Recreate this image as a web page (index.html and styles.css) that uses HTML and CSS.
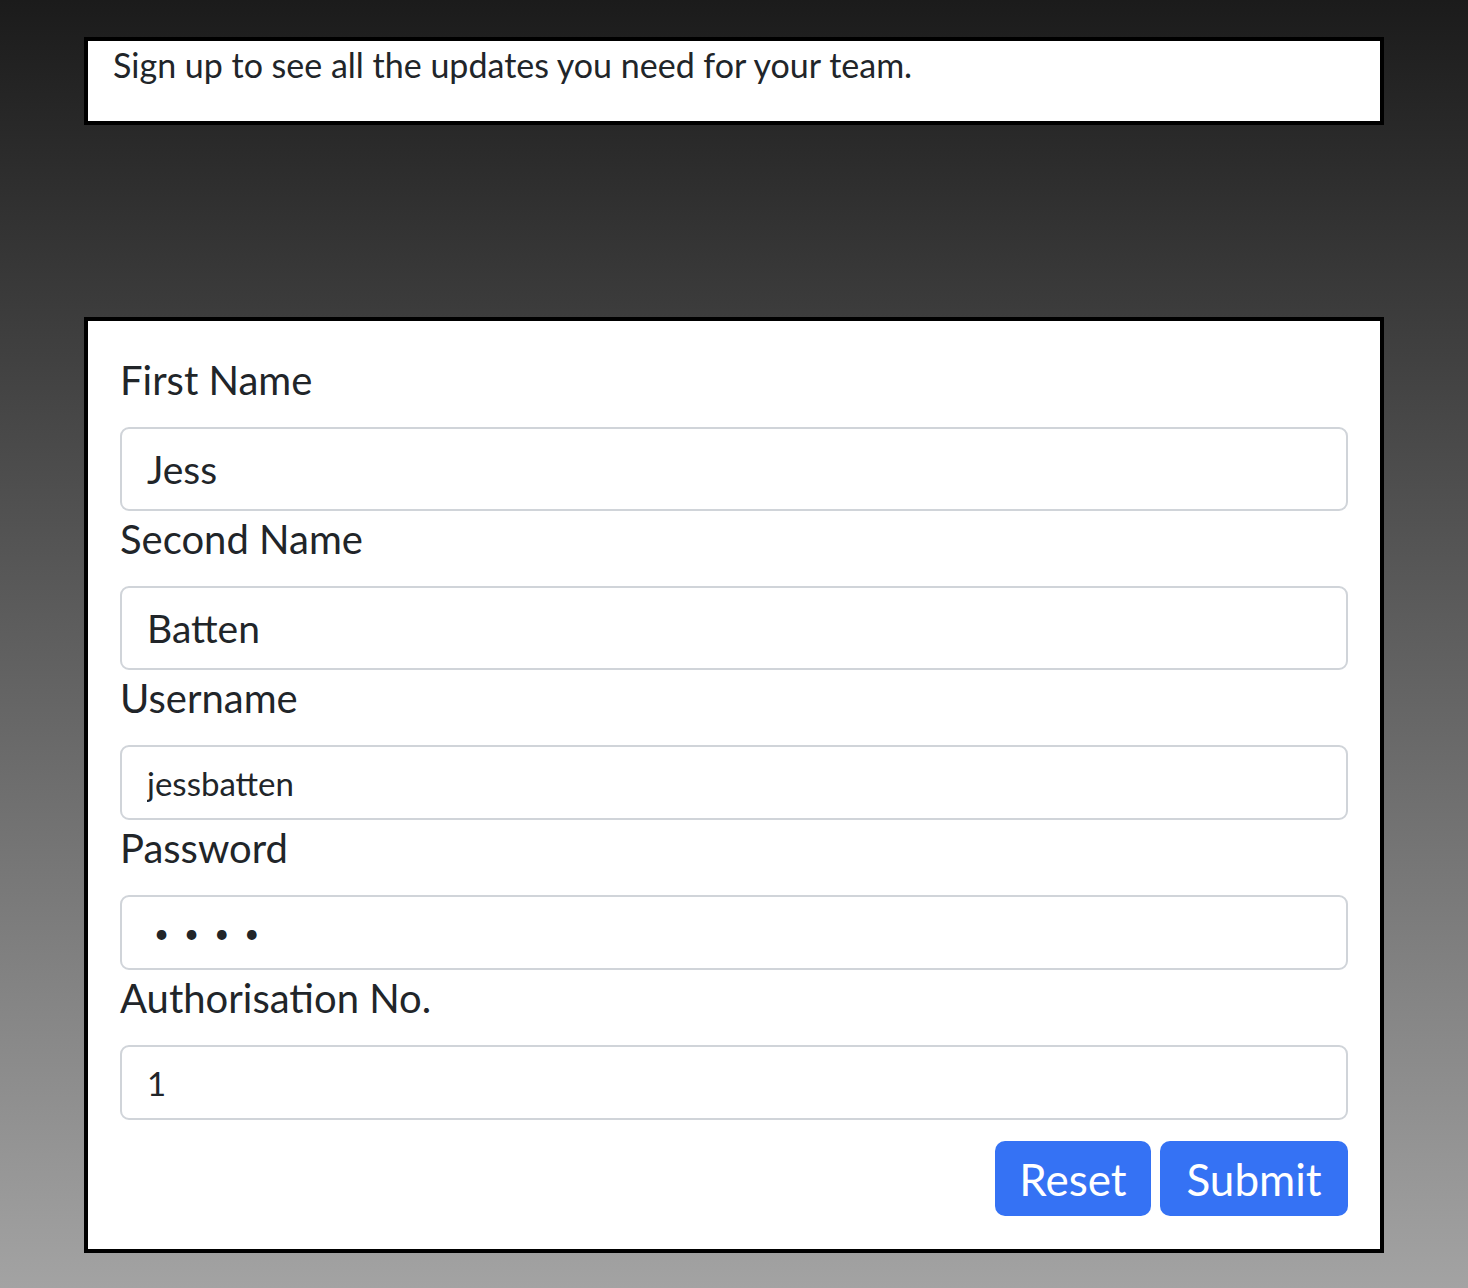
FILE: index.html
```html
<!DOCTYPE html>
<html>
<head>
<meta charset="utf-8">
<link rel="stylesheet" href="styles.css">
</head>
<body>
<div class="page">
  <div class="intro">
    <p>Sign up to see all the updates you need for your team.</p>
  </div>
  <form class="card">
    <label class="lbl" for="fn">First Name</label>
    <input class="field field-lg" id="fn" type="text" value="Jess">
    <label class="lbl" for="sn">Second Name</label>
    <input class="field field-lg" id="sn" type="text" value="Batten">
    <label class="lbl" for="un">Username</label>
    <input class="field" id="un" type="text" value="jessbatten">
    <label class="lbl" for="pw">Password</label>
    <input class="field field-pw" id="pw" type="password" value="1234">
    <label class="lbl" for="an">Authorisation No.</label>
    <input class="field" id="an" type="text" value="1">
    <div class="actions">
      <button type="button" class="btn btn-reset">Reset</button>
      <button type="button" class="btn btn-submit">Submit</button>
    </div>
  </form>
</div>
</body>
</html>
```

FILE: styles.css
```css
html, body {
  margin: 0;
  padding: 0;
}
body {
  min-height: 1288px;
  background: linear-gradient(to bottom, #1b1b1b 0%, #a3a3a3 100%);
  font-family: "Lato", "Noto Sans", sans-serif;
  color: #212529;
}
.page {
  padding: 37px 84px 0;
}
.intro {
  background: #fff;
  border: 4px solid #000;
  padding: 0 25px 32px;
}
.intro p {
  margin: 0;
  font-size: 34px;
  line-height: 48px;
}
.card {
  margin-top: 192px;
  background: #fff;
  border: 4px solid #000;
  padding: 31px 32px 33px;
  display: flex;
  flex-direction: column;
}
.lbl {
  display: block;
  font-size: 40px;
  line-height: 57px;
  margin-bottom: 18px;
}
.field {
  box-sizing: border-box;
  width: 100%;
  height: 75px;
  border: 2px solid #d0d4d9;
  border-radius: 9px;
  padding: 0 25px;
  font-family: inherit;
  font-size: 33px;
  color: #212529;
  background: #fff;
  outline: none;
}
.field-lg {
  height: 84px;
  font-size: 39px;
}
.field-pw {
  font-size: 26px;
  letter-spacing: 15px;
  padding-left: 32px;
}
.actions {
  display: flex;
  justify-content: flex-end;
  gap: 9px;
  margin-top: 21px;
}
.btn {
  height: 75px;
  border: none;
  border-radius: 10px;
  background: #3572f4;
  color: #fff;
  font-family: inherit;
  font-size: 44px;
  padding: 0;
}
.btn-reset {
  width: 156px;
}
.btn-submit {
  width: 188px;
}
```
